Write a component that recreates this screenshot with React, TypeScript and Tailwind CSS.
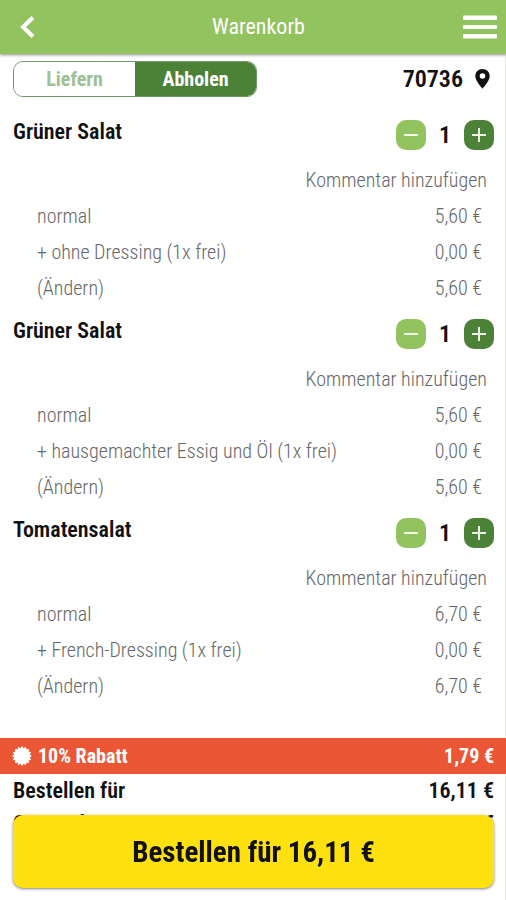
import React, { useState } from "react";

type Line = { label: string; price: string };
type Item = { name: string; lines: Line[]; total: string };

const items: Item[] = [
  {
    name: "Grüner Salat",
    lines: [
      { label: "normal", price: "5,60 €" },
      { label: "+ ohne Dressing (1x frei)", price: "0,00 €" },
    ],
    total: "5,60 €",
  },
  {
    name: "Grüner Salat",
    lines: [
      { label: "normal", price: "5,60 €" },
      { label: "+ hausgemachter Essig und Öl (1x frei)", price: "0,00 €" },
    ],
    total: "5,60 €",
  },
  {
    name: "Tomatensalat",
    lines: [
      { label: "normal", price: "6,70 €" },
      { label: "+ French-Dressing (1x frei)", price: "0,00 €" },
    ],
    total: "6,70 €",
  },
];

function Header() {
  return (
    <header className="relative flex h-[54px] items-center justify-between bg-[#93c35f] pl-5 pr-[9px] text-white shadow-[0_1px_3px_rgba(0,0,0,0.45)]">
      <button type="button" aria-label="Zurück" className="w-[34px]">
        <svg width="15" height="22" viewBox="0 0 15 22" fill="none" aria-hidden="true">
          <path d="M13 1.500 3 11l10 9.500" stroke="currentColor" strokeWidth="4" />
        </svg>
      </button>
      <h1 className="text-[22px] leading-6">Warenkorb</h1>
      <button type="button" aria-label="Menü">
        <svg width="34" height="24" viewBox="0 0 34 24" fill="currentColor" aria-hidden="true">
          <rect y="0.500" width="34" height="4.500" rx="1" />
          <rect y="10" width="34" height="4" rx="1" />
          <rect y="19" width="34" height="4.500" rx="1" />
        </svg>
      </button>
    </header>
  );
}

function ModeBar() {
  const [mode, setMode] = useState("abholen");
  const on = "bg-[#4b8237] text-white";
  const off = "bg-white text-[#9dc095]";
  return (
    <div className="flex items-center justify-between pb-[10px] pl-[13px] pr-4 pt-[7px]">
      <div className="flex h-9 w-[244px] overflow-hidden rounded-[10px] border border-[#6f9a66] text-[20px] font-bold leading-6">
        <button type="button" onClick={() => setMode("liefern")} className={`flex-1 ${mode === "liefern" ? on : off}`}>
          Liefern
        </button>
        <button type="button" onClick={() => setMode("abholen")} className={`flex-1 ${mode === "abholen" ? on : off}`}>
          Abholen
        </button>
      </div>
      <button type="button" className="flex items-center gap-3 text-[24px] font-semibold leading-7">
        70736
        <svg width="15" height="20" viewBox="0 0 15 20" aria-hidden="true">
          <path
            fill="currentColor"
            fillRule="evenodd"
            d="M7.500 0C3.400 0 .3 3.100.3 7.100c0 4.400 5 10 7.200 12.700 2.200-2.700 7.200-8.300 7.200-12.700C14.700 3.100 11.600 0 7.500 0Zm0 4.200a2.800 2.800 0 1 1 0 5.600 2.800 2.800 0 0 1 0-5.600Z"
          />
        </svg>
      </button>
    </div>
  );
}

function CartItem({ item }: { item: Item }) {
  const [count, setCount] = useState(1);
  return (
    <section>
      <div className="flex h-[55px] items-center justify-between pl-[13px] pr-3">
        <h2 className="pb-[6px] text-[22px] font-semibold leading-6">{item.name}</h2>
        <div className="flex items-center">
          <button
            type="button"
            aria-label="Weniger"
            onClick={() => setCount(Math.max(0, count - 1))}
            className="flex size-[30px] items-center justify-center rounded-[10px] bg-[#93c35f]"
          >
            <svg width="14" height="14" viewBox="0 0 14 14" aria-hidden="true">
              <path d="M0 7h14" stroke="#f0f8e6" strokeWidth="2" />
            </svg>
          </button>
          <span className="w-[38px] text-center text-[24px] font-semibold leading-7">{count}</span>
          <button
            type="button"
            aria-label="Mehr"
            onClick={() => setCount(count + 1)}
            className="flex size-[30px] items-center justify-center rounded-[10px] bg-[#4b8237]"
          >
            <svg width="14" height="14" viewBox="0 0 14 14" aria-hidden="true">
              <path d="M0 7h14M7 0v14" stroke="#f0f8e6" strokeWidth="2" />
            </svg>
          </button>
        </div>
      </div>
      <div className="text-[20px] font-light leading-9 text-[#666666]">
        <div className="flex h-9 justify-end pr-[19px]">
          <button type="button">Kommentar hinzufügen</button>
        </div>
        {item.lines.map((line) => (
          <div key={line.label} className="flex h-9 justify-between pl-[37px] pr-6">
            <span>{line.label}</span>
            <span>{line.price}</span>
          </div>
        ))}
        <div className="flex h-9 justify-between pl-[37px] pr-6">
          <button type="button">(Ändern)</button>
          <span>{item.total}</span>
        </div>
      </div>
    </section>
  );
}

function Badge() {
  const points = Array.from({ length: 32 }, (_, i) => {
    const r = i % 2 ? 8 : 10;
    const a = (i * Math.PI) / 16;
    return `${10 + r * Math.sin(a)},${10 - r * Math.cos(a)}`;
  }).join(" ");
  return (
    <svg width="20" height="20" viewBox="0 0 20 20" fill="currentColor" aria-hidden="true">
      <polygon points={points} />
    </svg>
  );
}

export default function App() {
  return (
    <div className="min-h-screen bg-white font-['Roboto_Condensed','Liberation_Sans_Narrow',Roboto,sans-serif] text-[#111111] shadow-[inset_-1px_0_0_#e6ece3]">
      <Header />
      <main className="pb-14">
        <ModeBar />
        {items.map((item, i) => (
          <CartItem key={i} item={item} />
        ))}
        <div className="mt-[34px] flex h-9 items-center gap-[6px] bg-[#eb5735] px-3 text-[20px] font-bold leading-6 text-white">
          <Badge />
          <span className="flex-1">10% Rabatt</span>
          <span>1,79 €</span>
        </div>
        <div className="text-[22px] font-semibold leading-[33px]">
          <div className="flex justify-between pl-[13px] pr-3">
            <span>Bestellen für</span>
            <span>16,11 €</span>
          </div>
          <div className="flex justify-between pl-[13px] pr-3">
            <span>Gesamtbetrag</span>
            <span>16,11 €</span>
          </div>
        </div>
      </main>
      <button
        type="button"
        className="fixed bottom-3 left-[13px] right-3 h-[73px] rounded-[10px] bg-[#ffe10f] text-[29px] font-bold leading-8 shadow-[0_1px_3px_rgba(0,0,0,0.5)]"
      >
        Bestellen für 16,11 €
      </button>
    </div>
  );
}
